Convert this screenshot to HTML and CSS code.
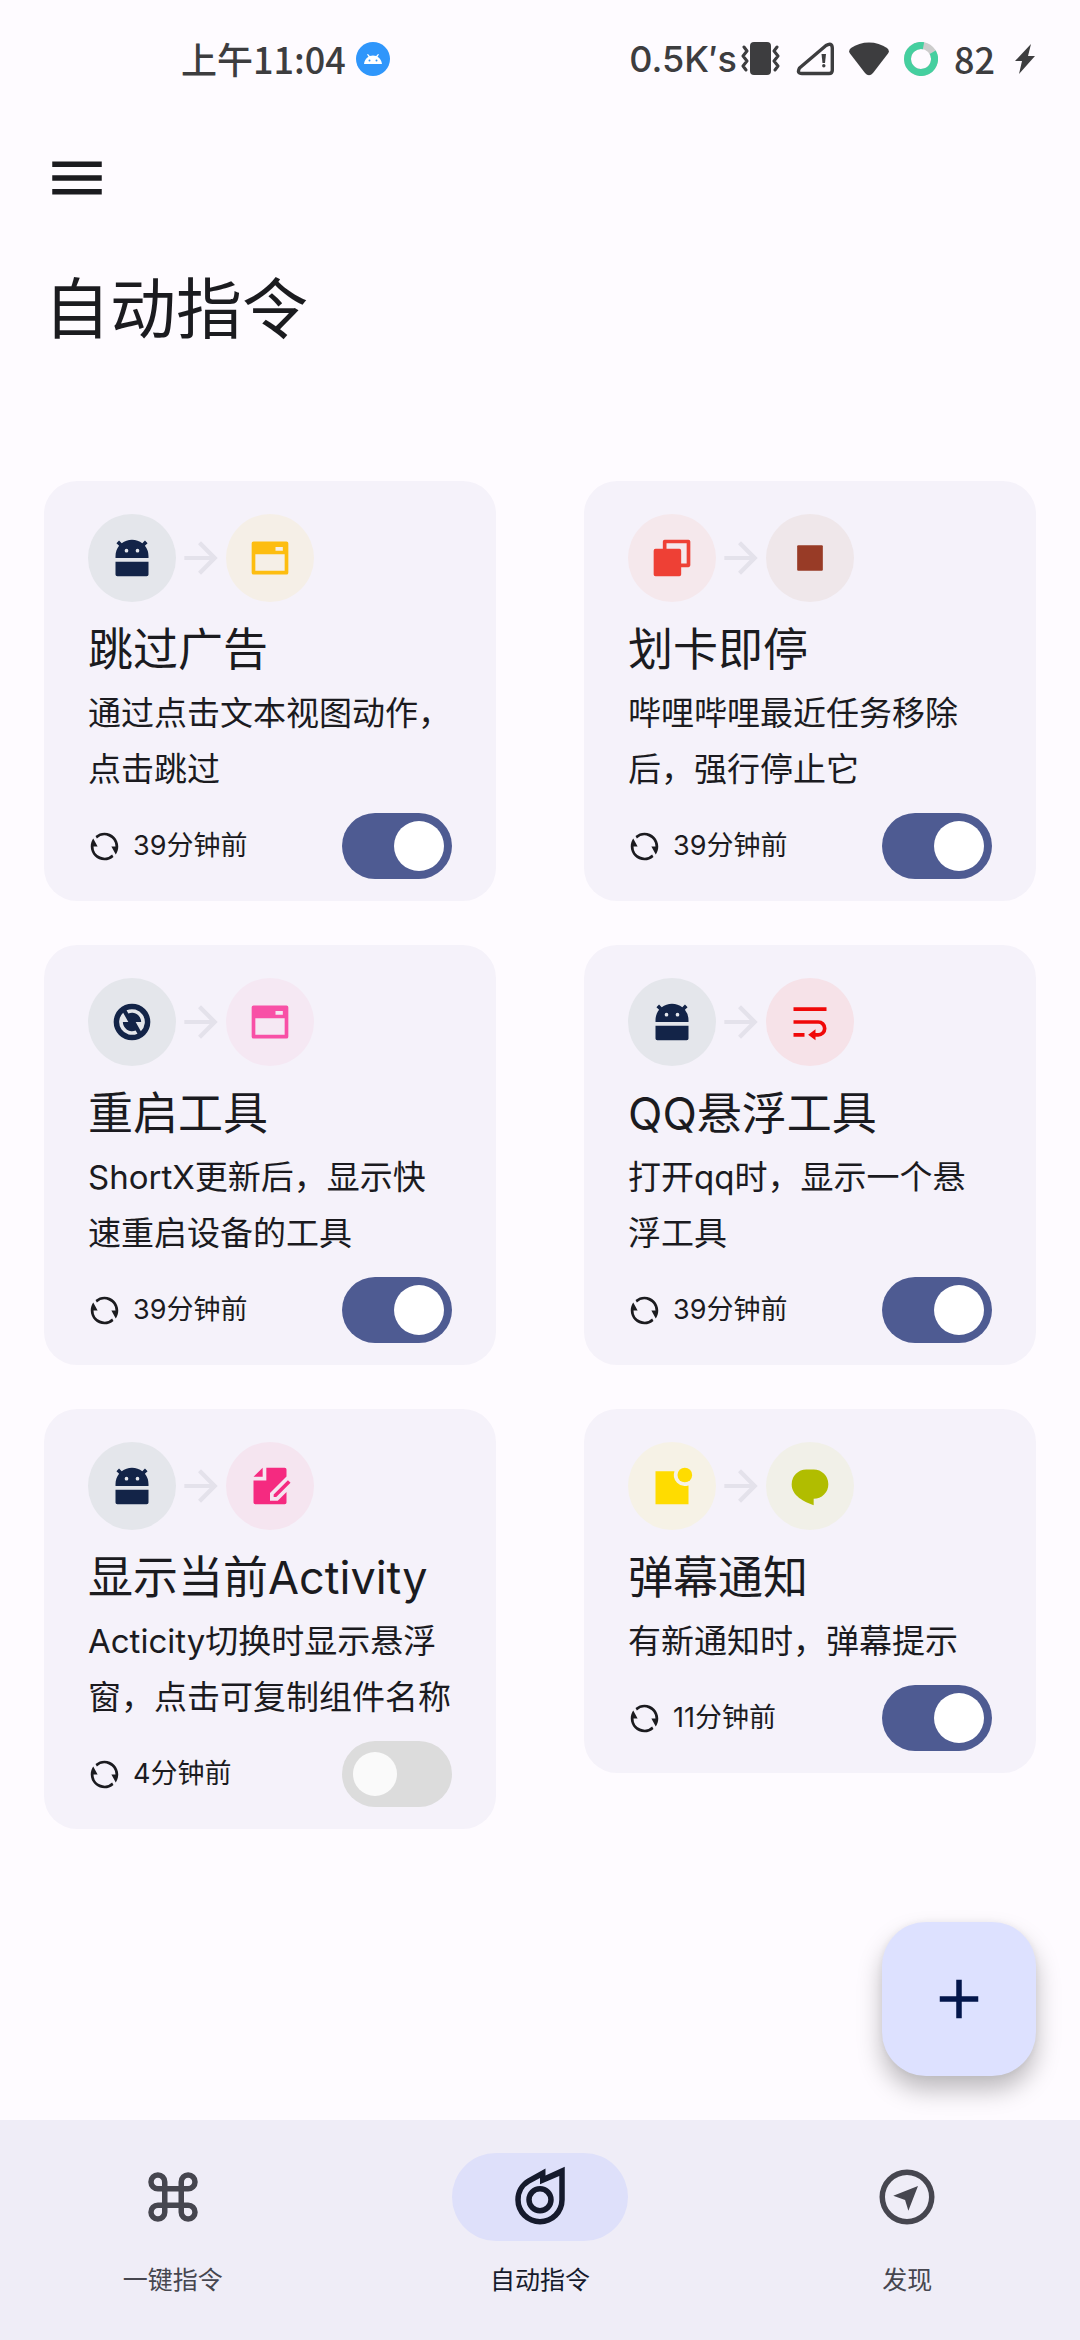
FILE: index.html
```html
<!DOCTYPE html>
<html lang="zh-CN">
<head>
<meta charset="utf-8">
<meta name="viewport" content="width=device-width, initial-scale=1">
<title>自动指令</title>
<link rel="stylesheet" href="styles.css">
</head>
<body>
<svg class="sprite" aria-hidden="true">
  <symbol id="android" viewBox="0 0 24 24"><path fill-rule="evenodd" d="M6.382 3.968A8.96 8.96 0 0 1 12 2c2.125 0 4.078.736 5.618 1.968l1.453-1.453 1.414 1.414-1.453 1.453A8.96 8.96 0 0 1 21 11v1H3v-1c0-2.125.736-4.078 1.968-5.618L3.515 3.929l1.414-1.414 1.453 1.453zM3 14h18v7a1 1 0 0 1-1 1H4a1 1 0 0 1-1-1v-7zm6-5a1 1 0 1 0 0-2 1 1 0 0 0 0 2zm6 0a1 1 0 1 0 0-2 1 1 0 0 0 0 2z"/></symbol>
  <symbol id="window" viewBox="0 0 24 24"><path fill-rule="evenodd" d="M3 3h18a1 1 0 0 1 1 1v16a1 1 0 0 1-1 1H3a1 1 0 0 1-1-1V4a1 1 0 0 1 1-1zm1 7v9h16v-9H4zm11-4v2h4V6h-4z"/></symbol>
  <symbol id="arrow" viewBox="0 0 24 24"><path d="M4 11h12.17l-5.59-5.59L12 4l8 8-8 8-1.41-1.41L16.17 13H4z"/></symbol>
  <symbol id="refresh" viewBox="0 0 24 24"><path d="M5.463 4.433A9.961 9.961 0 0 1 12 2c5.523 0 10 4.477 10 10 0 2.136-.67 4.116-1.81 5.74L17 12h3A8 8 0 0 0 6.46 6.228l-.997-1.795zm13.074 15.134A9.961 9.961 0 0 1 12 22C6.477 22 2 17.523 2 12c0-2.136.67-4.116 1.81-5.74L7 12H4a8 8 0 0 0 13.54 5.772l.997 1.795z"/></symbol>
</svg>

<header class="status">
  <span>上午11:04</span>
  <svg class="badge" width="34" height="34" viewBox="0 0 34 34"><circle cx="17" cy="17" r="17" fill="#2f96fb"/><path fill="#fff" d="M8 22c.3-3 2-6 4.500-7.200L11 12.500l1-.6 1.800 2.200a10 10 0 0 1 6.400 0L22 11.900l1 .6-1.500 2.300C24 16 25.700 19 26 22z"/><circle cx="13.500" cy="18.500" r="1" fill="#2f96fb"/><circle cx="20.500" cy="18.500" r="1" fill="#2f96fb"/></svg>
  <div class="status-right">
    <span class="speed">0.5K′s</span>
    <svg class="vibrate" width="40" height="34" viewBox="0 0 40 34"><rect x="9" y="0" width="21" height="33" rx="4" fill="#3d3d3f"/><path d="M3 5l3 4-4 5 4 5-4 5 3 4M36 5l-3 4 4 5-4 5 4 5-3 4" fill="none" stroke="#3d3d3f" stroke-width="3" stroke-linecap="round" stroke-linejoin="round"/></svg>
    <svg class="signal" width="38" height="34" viewBox="0 0 38 34"><path d="M30 3.500L3.500 26Q.5 31.500 6 31.500H33q3.300 0 3.300-3.300V6Q36 0 30 3.500z" fill="none" stroke="#3d3d3f" stroke-width="3.400"/><path d="M25.500 12h4.500l-1 9h-2.500z" fill="#3d3d3f"/><circle cx="27.800" cy="23.800" r="1.700" fill="#3d3d3f"/></svg>
    <svg class="wifi" width="40" height="34" viewBox="0 0 40 34"><path d="M2 6C12-1.500 28-1.500 38 6q3 2.500 1 5.500L24 31q-4 4.500-8 0L1 11.500Q-1 8.500 2 6z" fill="#3d3d3f"/></svg>
    <svg class="ring" width="34" height="34" viewBox="0 0 34 34"><circle cx="17" cy="17" r="13.500" fill="none" stroke="#ccc" stroke-width="7"/><path d="M28.700 10.200A13.500 13.500 0 1 1 19.500 3.700" fill="none" stroke="#45cf9f" stroke-width="7"/></svg>
    <span>82</span>
    <svg class="bolt" width="20" height="30" viewBox="0 0 20 30"><path d="M16 0L0 17h7L4 30 20 12h-7z" fill="#3d3d3f"/></svg>
  </div>
</header>

<main class="page">
  <button class="menu" type="button" aria-label="菜单"><svg width="66" height="66" viewBox="0 0 24 24"><path d="M3 6h18v2H3zm0 5h18v2H3zm0 5h18v2H3z"/></svg></button>
  <h1>自动指令</h1>

  <section class="cards">
    <article class="card">
      <div class="flow">
        <span class="dot navy"><svg><use href="#android"/></svg></span>
        <svg class="arrow"><use href="#arrow"/></svg>
        <span class="dot amber"><svg><use href="#window"/></svg></span>
      </div>
      <h2><label for="s1">跳过广告</label></h2>
      <p>通过点击文本视图动作，点击跳过</p>
      <div class="foot"><svg class="sync"><use href="#refresh"/></svg><span>39分钟前</span><input class="switch" type="checkbox" role="switch" id="s1" checked></div>
    </article>

    <article class="card">
      <div class="flow">
        <span class="dot red"><svg viewBox="0 0 24 24"><path fill-rule="evenodd" d="M7 7V3a1 1 0 0 1 1-1h13a1 1 0 0 1 1 1v13a1 1 0 0 1-1 1h-4v4a1 1 0 0 1-1 1H3a1 1 0 0 1-1-1V8a1 1 0 0 1 1-1h4zm2 0h7a1 1 0 0 1 1 1v7h3V4H9v3z"/></svg></span>
        <svg class="arrow"><use href="#arrow"/></svg>
        <span class="dot brown"><svg viewBox="0 0 24 24"><rect x="5" y="5" width="14" height="14" rx=".6"/></svg></span>
      </div>
      <h2><label for="s2">划卡即停</label></h2>
      <p>哔哩哔哩最近任务移除后，强行停止它</p>
      <div class="foot"><svg class="sync"><use href="#refresh"/></svg><span>39分钟前</span><input class="switch" type="checkbox" role="switch" id="s2" checked></div>
    </article>

    <article class="card">
      <div class="flow">
        <span class="dot navy"><svg viewBox="0 0 24 24"><path fill-rule="evenodd" d="M12 2a10 10 0 1 1 0 20 10 10 0 0 1 0-20zM16.820 17.076A7 7 0 0 0 9.032 5.658l.975 1.755A5 5 0 0 1 17 12h-3l2.820 5.076zM14.968 18.342l-.975-1.755A5 5 0 0 1 7 12h3L7.180 6.924a7 7 0 0 0 7.788 11.418z"/></svg></span>
        <svg class="arrow"><use href="#arrow"/></svg>
        <span class="dot pink"><svg><use href="#window"/></svg></span>
      </div>
      <h2><label for="s3">重启工具</label></h2>
      <p>ShortX更新后，显示快速重启设备的工具</p>
      <div class="foot"><svg class="sync"><use href="#refresh"/></svg><span>39分钟前</span><input class="switch" type="checkbox" role="switch" id="s3" checked></div>
    </article>

    <article class="card">
      <div class="flow">
        <span class="dot navy"><svg><use href="#android"/></svg></span>
        <svg class="arrow"><use href="#arrow"/></svg>
        <span class="dot scarlet"><svg viewBox="0 0 24 24"><path d="M15 18h1.500a2.500 2.500 0 0 0 0-5H3v-2h13.500a4.500 4.500 0 1 1 0 9H15v2l-4-3 4-3v2zM3 4h18v2H3V4zm6 14v2H3v-2h6z"/></svg></span>
      </div>
      <h2><label for="s4">QQ悬浮工具</label></h2>
      <p>打开qq时，显示一个悬浮工具</p>
      <div class="foot"><svg class="sync"><use href="#refresh"/></svg><span>39分钟前</span><input class="switch" type="checkbox" role="switch" id="s4" checked></div>
    </article>

    <article class="card">
      <div class="flow">
        <span class="dot navy"><svg><use href="#android"/></svg></span>
        <svg class="arrow"><use href="#arrow"/></svg>
        <span class="dot rose"><svg viewBox="0 0 24 24"><path d="M21 15.243V21a1 1 0 0 1-1 1H4a1 1 0 0 1-1-1V9h7V2h10a1 1 0 0 1 1 1v3.757l-9 9V20h4.240L21 15.243zm.778-6.436 1.414 1.414L15.414 18H14v-1.414l7.778-7.779zM3 7l5-5v5H3z"/></svg></span>
      </div>
      <h2><label for="s5">显示当前Activity</label></h2>
      <p>Acticity切换时显示悬浮窗，点击可复制组件名称</p>
      <div class="foot"><svg class="sync"><use href="#refresh"/></svg><span>4分钟前</span><input class="switch" type="checkbox" role="switch" id="s5"></div>
    </article>

    <article class="card">
      <div class="flow">
        <span class="dot yellow"><svg viewBox="0 0 24 24"><path d="M13.340 4A6 6 0 0 0 21 11.660V22H3V4h10.340z"/><circle cx="19" cy="6" r="4"/></svg></span>
        <svg class="arrow"><use href="#arrow"/></svg>
        <span class="dot lime"><svg viewBox="0 0 24 24"><path d="M10 3h4a8 8 0 1 1 0 16v3.500c-5-2-12-5-12-11.500a8 8 0 0 1 8-8z"/></svg></span>
      </div>
      <h2><label for="s6">弹幕通知</label></h2>
      <p>有新通知时，弹幕提示</p>
      <div class="foot"><svg class="sync"><use href="#refresh"/></svg><span>11分钟前</span><input class="switch" type="checkbox" role="switch" id="s6" checked></div>
    </article>
  </section>
</main>

<button class="fab" type="button" aria-label="添加"><svg width="66" height="66" viewBox="0 0 24 24"><path d="M19 13h-6v6h-2v-6H5v-2h6V5h2v6h6z"/></svg></button>

<nav class="tabs">
  <a href="#one-tap"><span class="pill"><svg viewBox="0 0 24 24"><path fill-rule="evenodd" d="M10 8h4V6.500A3.500 3.500 0 1 1 17.500 10H16v4h1.500a3.500 3.500 0 1 1-3.500 3.500V16h-4v1.500A3.500 3.500 0 1 1 6.500 14H8v-4H6.500A3.500 3.500 0 1 1 10 6.500V8zM8 8V6.500A1.500 1.500 0 1 0 6.500 8H8zm0 8H6.500A1.500 1.500 0 1 0 8 17.500V16zm8-8h1.500A1.500 1.500 0 1 0 16 6.500V8zm0 8v1.500a1.500 1.500 0 1 0 1.500-1.500H16zm-6-6v4h4v-4h-4z"/></svg></span>一键指令</a>
  <a href="#auto" class="active" aria-current="page"><span class="pill"><svg viewBox="0 0 24 24"><path fill-rule="evenodd" d="M21 1v12a9 9 0 1 1-18 0C3 9.800 4.700 7 7.300 5.400L14 1.600v2.600L21 1zm-2 3.400L12 7.400V5.100L8.300 7.100A6.700 6.700 0 0 0 5 13a7 7 0 1 0 14 0V4.400zM12 8a5 5 0 1 1 0 10 5 5 0 0 1 0-10zm0 2a3 3 0 1 0 0 6 3 3 0 0 0 0-6z"/></svg></span>自动指令</a>
  <a href="#discover"><span class="pill"><svg viewBox="0 0 24 24"><path fill-rule="evenodd" d="M12 2a10 10 0 1 1 0 20 10 10 0 0 1 0-20zm0 2a8 8 0 1 0 0 16 8 8 0 0 0 0-16zM16 8l-3.500 9-1.200-3.900L7 11.500z"/></svg></span>发现</a>
</nav>
</body>
</html>
```
FILE: styles.css
```css
* {
  box-sizing: border-box;
}

body {
  margin: 0;
  min-height: 100vh;
  display: flex;
  flex-direction: column;
  background: #fefbff;
  color: #1b1b1f;
  font-family: Inter, "Noto Sans CJK SC", sans-serif;
}

svg {
  display: block;
  flex: none;
  fill: currentColor;
}

.sprite {
  width: 0;
  height: 0;
  position: absolute;
}

button {
  padding: 0;
  border: 0;
  background: none;
  color: inherit;
  font: inherit;
}

.status {
  display: flex;
  align-items: center;
  height: 118px;
  padding: 0 45px 0 181px;
  color: #3d3d3f;
  font: 500 36px/44px "Noto Sans CJK SC", sans-serif;
}

.status span {
  padding-bottom: 3px;
}

.status .speed {
  padding: 0;
  font-family: Inter, sans-serif;
}

.badge {
  margin-left: 10px;
}

.status-right {
  display: flex;
  align-items: center;
  margin-left: auto;
}

.vibrate {
  margin-left: 4px;
}

.signal,
.wifi,
.ring {
  margin-left: 15px;
}

.ring + span {
  margin-left: 16px;
}

.bolt {
  margin-left: 20px;
}

.page {
  flex: 1;
  padding: 27px 44px 44px;
}

.menu {
  display: block;
}

h1 {
  margin: 54px 0 128px;
  font-size: 66px;
  line-height: 88px;
  font-weight: 400;
}

.cards {
  display: grid;
  grid-template-columns: 1fr 1fr;
  gap: 44px 88px;
  align-items: start;
}

.card {
  padding: 33px 44px 22px;
  border-radius: 33px;
  background: #f5f2fa;
}

.flow {
  display: flex;
  align-items: center;
}

.dot {
  display: grid;
  place-items: center;
  width: 88px;
  height: 88px;
  border-radius: 50%;
}

.dot svg {
  width: 44px;
  height: 44px;
}

.navy { color: #132448; background: #e4e6eb; }
.amber { color: #fdbd10; background: #f5efe7; }
.red { color: #ee4035; background: #f5e8ec; }
.brown { color: #983b26; background: #efe7ea; }
.pink { color: #f850a6; background: #f5e8f3; }
.scarlet { color: #f00808; background: #f6e2e8; }
.rose { color: #f52a80; background: #f5e5f0; }
.yellow { color: #ffdc00; background: #f6f2e6; }
.lime { color: #b1bd00; background: #f1f0e8; }

.arrow {
  width: 50px;
  height: 50px;
  color: #e4e2eb;
}

h2 {
  margin: 16px 0 3px;
  font-size: 45px;
  line-height: 64px;
  font-weight: 400;
}

.card p {
  margin: 0 0 16px;
  font-size: 33px;
  line-height: 56px;
}

.foot {
  display: flex;
  align-items: center;
  font-size: 27px;
  line-height: 36px;
}

.sync {
  width: 33px;
  height: 33px;
  margin-right: 12px;
}

.switch {
  appearance: none;
  display: flex;
  align-items: center;
  width: 110px;
  height: 66px;
  margin: 0 0 0 auto;
  padding: 0 11px;
  border-radius: 33px;
  background: #dcdcdc;
}

.switch::before {
  content: "";
  width: 44px;
  height: 44px;
  border-radius: 50%;
  background: #fafafa;
}

.switch:checked {
  justify-content: flex-end;
  padding: 0 8px;
  background: #4e5b92;
}

.switch:checked::before {
  width: 50px;
  height: 50px;
  background: #fff;
}

.fab {
  position: fixed;
  right: 44px;
  bottom: 264px;
  display: grid;
  place-items: center;
  width: 154px;
  height: 154px;
  border-radius: 44px;
  background: #dde1ff;
  color: #03164b;
  box-shadow: 0 14px 24px rgba(0, 0, 0, .26), 0 0 8px rgba(0, 0, 0, .06);
}

.tabs {
  position: sticky;
  bottom: 0;
  z-index: 1;
  display: grid;
  grid-template-columns: repeat(3, 1fr);
  gap: 22px;
  padding: 33px 0 42px;
  background: #efedf7;
}

.tabs a {
  display: flex;
  flex-direction: column;
  align-items: center;
  gap: 21px;
  color: #46464f;
  font-size: 25px;
  line-height: 36px;
  text-decoration: none;
}

.tabs .active {
  color: #151a2c;
}

.pill {
  display: grid;
  place-items: center;
  width: 176px;
  height: 88px;
  border-radius: 44px;
}

.pill svg {
  width: 66px;
  height: 66px;
}

.active .pill {
  background: #dee0fa;
}
```
